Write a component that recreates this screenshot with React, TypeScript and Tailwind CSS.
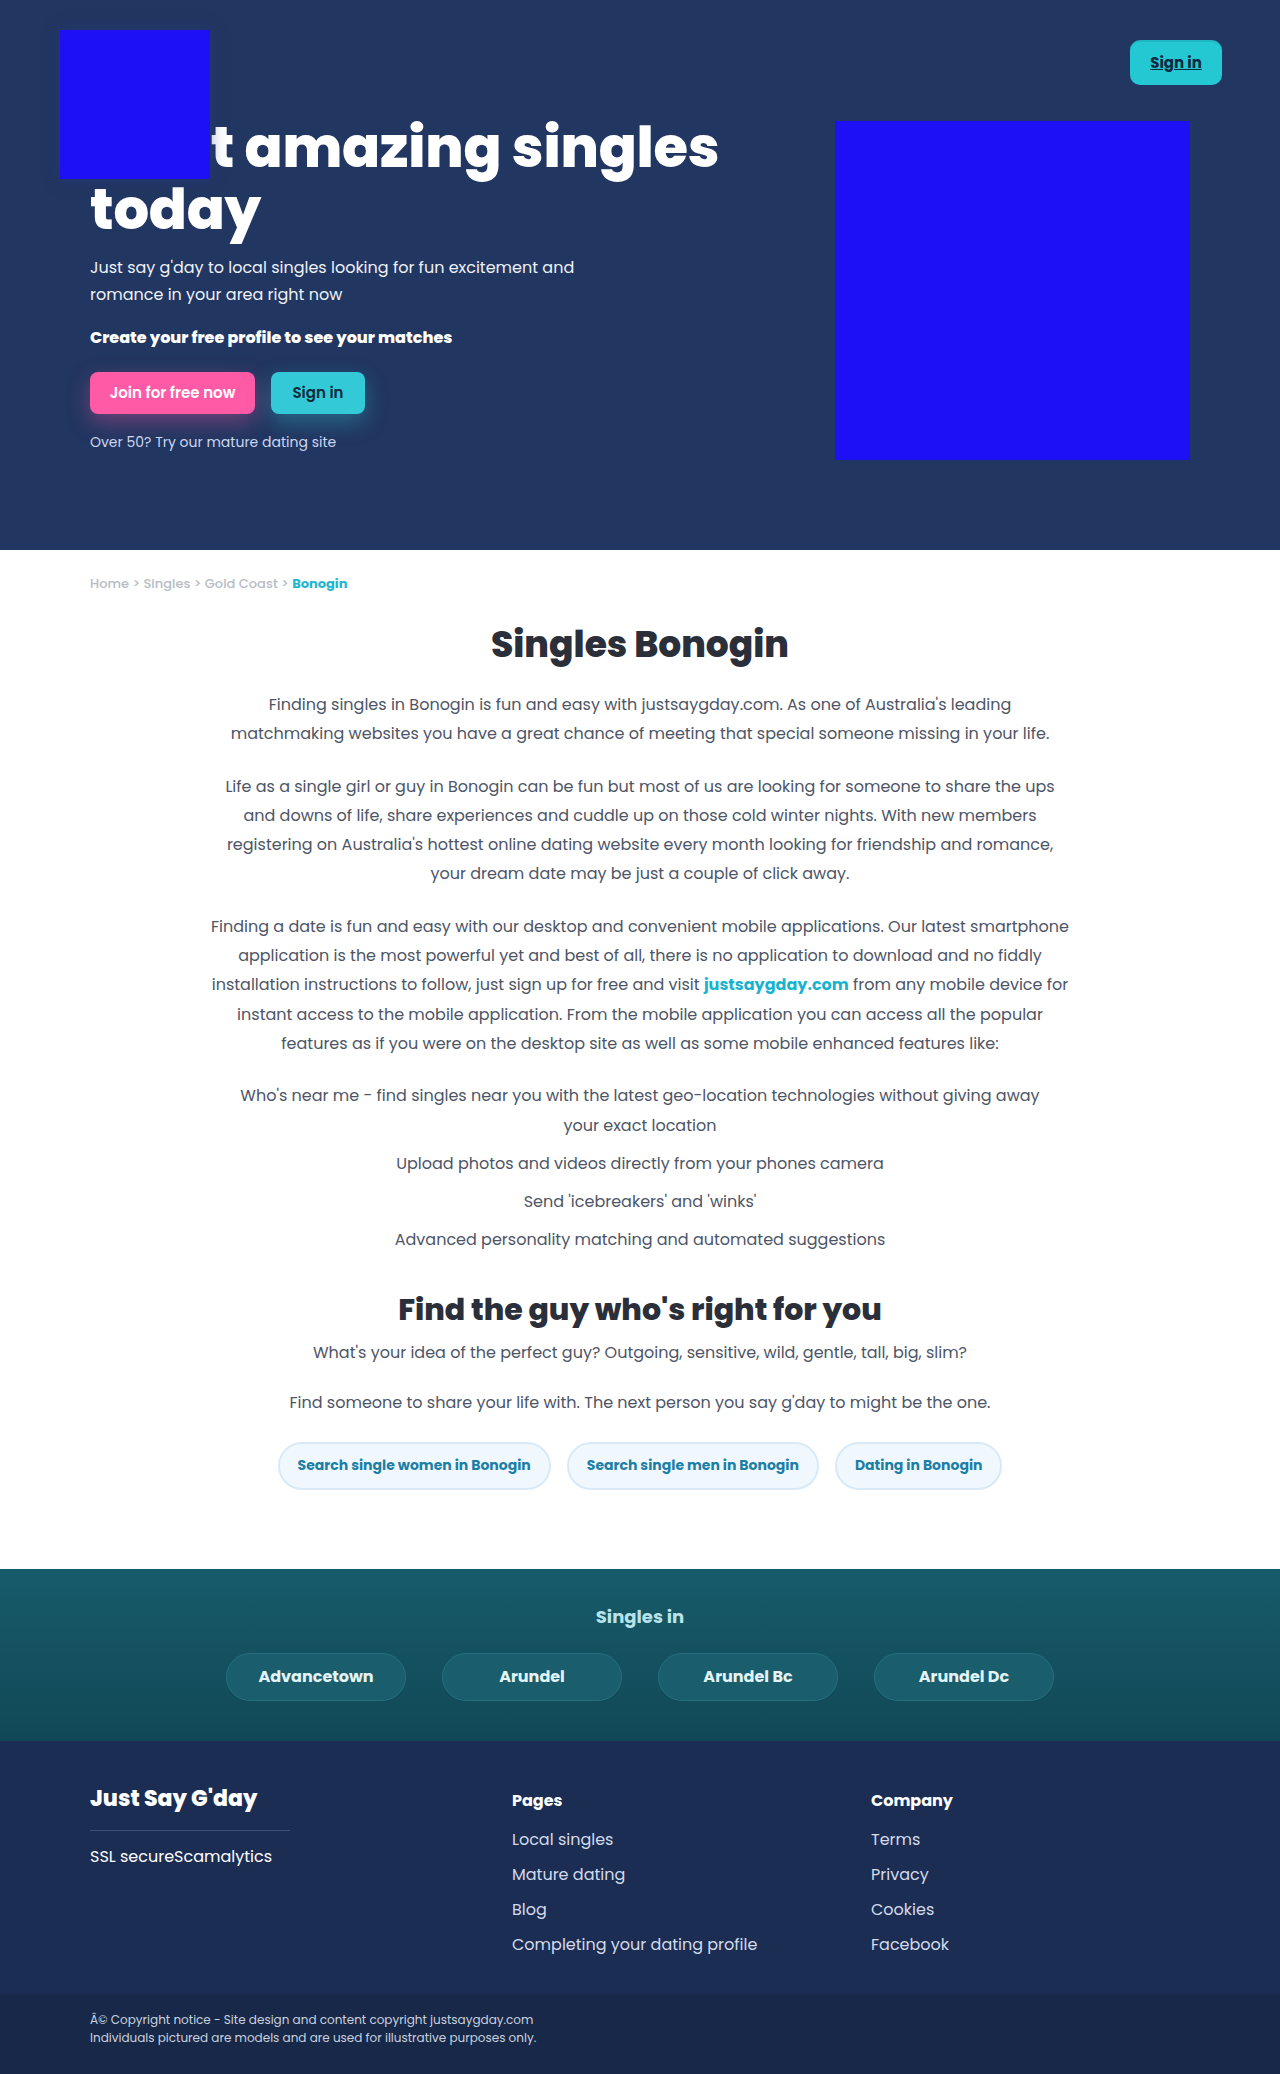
import React from "react";

const CRUMBS = ["Home", "Singles", "Gold Coast"];

const FEATURES = [
  "Who's near me - find singles near you with the latest geo-location technologies without giving away your exact location",
  "Upload photos and videos directly from your phones camera",
  "Send 'icebreakers' and 'winks'",
  "Advanced personality matching and automated suggestions",
];

const SEARCH_LINKS = [
  "Search single women in Bonogin",
  "Search single men in Bonogin",
  "Dating in Bonogin",
];

const NEARBY = ["Advancetown", "Arundel", "Arundel Bc", "Arundel Dc"];

const PAGES = ["Local singles", "Mature dating", "Blog", "Completing your dating profile"];
const COMPANY = ["Terms", "Privacy", "Cookies", "Facebook"];

function Hero() {
  return (
    <section className="relative h-[550px] bg-[#213660]">
      {/* Logo */}
      <div className="absolute left-[60px] top-[30px] z-10 h-[149px] w-[150px] bg-[#1e10f5] shadow-[0_0_14px_rgba(40,60,140,0.5)]" />

      <header className="flex justify-end px-[58px] pt-[40px]">
        <a
          href="#"
          className="flex h-[45px] w-[92px] items-center justify-center rounded-[10px] border-t-2 border-[#1fb5c2] bg-[#23c8d3] text-[15px] font-bold text-[#0f2740] underline"
        >
          Sign in
        </a>
      </header>

      <div className="mx-auto flex max-w-[1100px] items-start justify-between pt-[10px]">
        <div className="w-[680px] pt-[22px]">
          <h1 className="text-[56px] font-extrabold leading-[62px] tracking-[-0.2px] text-white">
            Meet amazing singles
            <br />
            today
          </h1>
          <p className="mt-[14px] w-[490px] text-[16px] leading-[26.5px] text-[#eef1f8]">
            Just say g'day to local singles looking for fun excitement and romance in your area right now
          </p>
          <p className="mt-[18px] text-[16px] font-extrabold leading-[24px] text-white">
            Create your free profile to see your matches
          </p>
          <div className="mt-[22px] flex gap-4">
            <a
              href="#"
              className="flex h-[42px] w-[165px] items-center justify-center rounded-[8px] bg-[#ff5aa6] text-[15px] font-semibold text-white shadow-[0_8px_22px_rgba(255,90,166,0.35)]"
            >
              Join for free now
            </a>
            <a
              href="#"
              className="flex h-[42px] w-[94px] items-center justify-center rounded-[8px] bg-[#33c9d6] text-[15px] font-semibold text-[#0f2a3d] shadow-[0_8px_22px_rgba(51,201,214,0.35)]"
            >
              Sign in
            </a>
          </div>
          <p className="mt-[18px] text-[14px] text-[#cdd6f2]">Over 50? Try our mature dating site</p>
        </div>
        <div className="mt-[26px] h-[339px] w-[355px] bg-[#1e10f5]" />
      </div>
    </section>
  );
}

function Content() {
  return (
    <section className="bg-white pb-[79px] pt-[26px]">
      <div className="mx-auto max-w-[1100px]">
        <nav className="text-[13px] font-medium leading-[16px] text-[#b7bcc6]">
          {CRUMBS.map((c) => (
            <span key={c}>{c} &gt; </span>
          ))}
          <span className="font-bold text-[#1fb6d0]">Bonogin</span>
        </nav>

        <h1 className="mt-[31px] text-center text-[36px] font-extrabold leading-[44px] text-[#2b2f3a]">
          Singles Bonogin
        </h1>

        <div className="mx-auto mt-[23px] max-w-[859px] space-y-[23px] text-center text-[16px] leading-[29.3px] text-[#4d5566]">
          <p>
            Finding singles in Bonogin is fun and easy with justsaygday.com. As one of Australia's leading matchmaking
            websites you have a great chance of meeting that special someone missing in your life.
          </p>
          <p>
            Life as a single girl or guy in Bonogin can be fun but most of us are looking for someone to share the ups and
            downs of life, share experiences and cuddle up on those cold winter nights. With new members registering on
            Australia's hottest online dating website every month looking for friendship and romance, your dream date may
            be just a couple of click away.
          </p>
          <p>
            Finding a date is fun and easy with our desktop and convenient mobile applications. Our latest smartphone
            application is the most powerful yet and best of all, there is no application to download and no fiddly
            installation instructions to follow, just sign up for free and visit{" "}
            <a href="#" className="font-bold text-[#1ab3cf]">
              justsaygday.com
            </a>{" "}
            from any mobile device for instant access to the mobile application. From the mobile application you can access
            all the popular features as if you were on the desktop site as well as some mobile enhanced features like:
          </p>
          <ul className="space-y-[9px] px-[20px]">
            {FEATURES.map((f) => (
              <li key={f}>{f}</li>
            ))}
          </ul>
        </div>

        <h2 className="mt-[37px] text-center text-[30px] font-extrabold leading-[36px] text-[#2b2f3a]">
          Find the guy who's right for you
        </h2>
        <p className="mt-[10px] text-center text-[16px] leading-[29px] text-[#4d5566]">
          What's your idea of the perfect guy? Outgoing, sensitive, wild, gentle, tall, big, slim?
        </p>
        <p className="mt-[21px] text-center text-[16px] leading-[29px] text-[#4d5566]">
          Find someone to share your life with. The next person you say g'day to might be the one.
        </p>

        <div className="mt-[25px] flex justify-center gap-4">
          {SEARCH_LINKS.map((s) => (
            <a
              key={s}
              href="#"
              className="flex h-[48px] items-center rounded-full border-2 border-[#d8eaf8] bg-[#f0f8fd] px-[18px] text-[14px] font-bold text-[#1b7fa6]"
            >
              {s}
            </a>
          ))}
        </div>
      </div>
    </section>
  );
}

function SinglesIn() {
  return (
    <section className="bg-gradient-to-b from-[#175b6a] to-[#114857] pb-[40px] pt-[34px]">
      <h3 className="text-center text-[18px] font-bold leading-[28px] text-[#b8e3ea]">Singles in</h3>
      <div className="mt-[22px] flex justify-center gap-[36px]">
        {NEARBY.map((n) => (
          <a
            key={n}
            href="#"
            className="flex h-[48px] w-[180px] items-center justify-center rounded-[24px] border border-[#25707e] bg-[#1a5e6d] text-[16px] font-bold text-[#e2f4f6]"
          >
            {n}
          </a>
        ))}
      </div>
    </section>
  );
}

function Footer() {
  return (
    <footer>
      <div className="bg-[#1c2d54] pb-[37px] pt-[43px]">
        <div className="mx-auto grid max-w-[1100px] grid-cols-[422px_359px_1fr]">
          <div>
            <div className="text-[22px] font-extrabold leading-[30px] text-white">Just Say G'day</div>
            <div className="mt-[16px] w-[200px] border-t border-[#3d4f74]" />
            <div className="mt-[14px] text-[16px] leading-[24px] text-white">SSL secureScamalytics</div>
          </div>
          <div className="pt-[5px]">
            <div className="text-[16px] font-bold leading-[24px] text-white">Pages</div>
            <ul className="mt-[15px] space-y-[11px]">
              {PAGES.map((p) => (
                <li key={p} className="text-[16px] leading-[24px] text-[#d3dbea]">
                  {p}
                </li>
              ))}
            </ul>
          </div>
          <div className="pt-[5px]">
            <div className="text-[16px] font-bold leading-[24px] text-white">Company</div>
            <ul className="mt-[15px] space-y-[11px]">
              {COMPANY.map((p) => (
                <li key={p} className="text-[16px] leading-[24px] text-[#d3dbea]">
                  {p}
                </li>
              ))}
            </ul>
          </div>
        </div>
      </div>
      <div className="bg-[#182848] pb-[28px] pt-[17px]">
        <div className="mx-auto max-w-[1100px] text-[12px] leading-[18.5px] text-[#c9d1df]">
          <p>Â© Copyright notice - Site design and content copyright justsaygday.com</p>
          <p>Individuals pictured are models and are used for illustrative purposes only.</p>
        </div>
      </div>
    </footer>
  );
}

export default function App() {
  return (
    <div className="font-['Poppins','Open_Sans',sans-serif]">
      <Hero />
      <Content />
      <SinglesIn />
      <Footer />
    </div>
  );
}
